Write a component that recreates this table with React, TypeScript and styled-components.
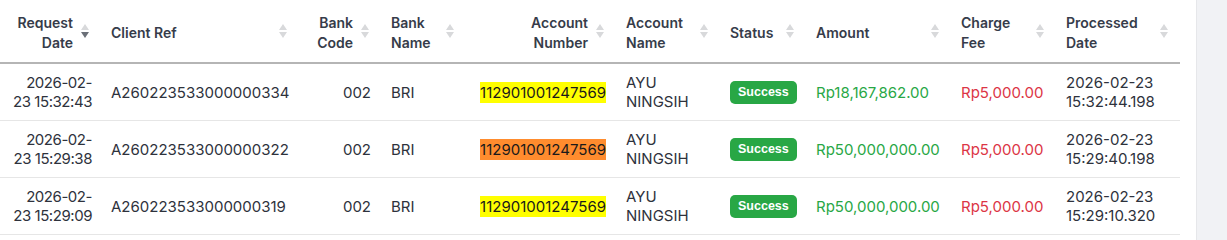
import React from "react";
import styled, { createGlobalStyle, css } from "styled-components";

const GlobalStyle = createGlobalStyle`
    html, body {
        margin: 0;
        padding: 0;
        background: white;
    }
    body {
        font-family: Inter, "Liberation Sans", sans-serif;
    }
`;

const Page = styled.div`
    display: flex;
    flex-direction: row;
    width: 1227px;
    height: 240px;
    overflow: hidden;
`;

const TableArea = styled.div`
    width: 1180px;
    flex-shrink: 0;
`;

const Gutter = styled.div`
    flex: 1;
    margin-left: 16px;
    background: #f1f2f5;
    border-left: 1px solid #e6e7ea;
`;

const Table = styled.table`
    width: 1180px;
    border-collapse: collapse;
    table-layout: fixed;
`;

const HeadCell = styled.th<{ $align?: "left" | "right" }>`
    position: relative;
    height: 58px;
    padding: 4px 28px 0 10px;
    text-align: ${(p) => p.$align ?? "left"};
    vertical-align: middle;
    font-size: 14px;
    font-weight: 600;
    line-height: 20px;
    color: #363c4a;
    border-bottom: 2px solid #b5b5b5;
`;

const SortIcon = styled.span`
    position: absolute;
    right: 12px;
    top: 50%;
    transform: translateY(-50%);
    display: flex;
    flex-direction: column;
    gap: 2px;
`;

const Arrow = styled.span<{ $down?: boolean; $active?: boolean }>`
    width: 0;
    height: 0;
    border-left: 4px solid transparent;
    border-right: 4px solid transparent;
    ${(p) =>
        p.$down
            ? css`border-top: 6px solid ${p.$active ? "#6b7078" : "#d8d9db"};`
            : css`border-bottom: 6px solid #d8d9db;`}
`;

const Row = styled.tr`
    border-bottom: 1px solid #e6e6e6;
`;

const Cell = styled.td<{ $align?: "left" | "right"; $color?: string }>`
    height: 56px;
    padding: 0 10px;
    text-align: ${(p) => p.$align ?? "left"};
    vertical-align: middle;
    font-size: 15px;
    line-height: 19px;
    color: ${(p) => p.$color ?? "#2e323c"};
`;

const DateCell = styled(Cell)`
    padding-right: 9px;
    white-space: nowrap;
    letter-spacing: -0.45px;
`;

const Highlight = styled.span<{ $bg: string }>`
    background: ${(p) => p.$bg};
    color: #1a1a1a;
    padding: 1px 0;
`;

const Badge = styled.span`
    display: inline-block;
    background: #28a745;
    color: white;
    font-family: "Liberation Sans", Arial, sans-serif;
    font-weight: 700;
    font-size: 12.5px;
    line-height: 23px;
    padding: 0 8px;
    border-radius: 5px;
`;

interface Column {
    label: React.ReactNode;
    width: number;
    align?: "left" | "right";
    active?: boolean;
}

const columns: Column[] = [
    { label: <>Request<br />Date</>, width: 101, align: "right", active: true },
    { label: "Client Ref", width: 198 },
    { label: <>Bank<br />Code</>, width: 82, align: "right" },
    { label: <>Bank<br />Name</>, width: 85 },
    { label: <>Account<br />Number</>, width: 150, align: "right" },
    { label: <>Account<br />Name</>, width: 104 },
    { label: "Status", width: 86 },
    { label: "Amount", width: 145 },
    { label: <>Charge<br />Fee</>, width: 105 },
    { label: <>Processed<br />Date</>, width: 124 },
];

interface Transaction {
    requestDate: string;
    requestTime: string;
    clientRef: string;
    account: string;
    highlight: string;
    amount: string;
    processedDate: string;
    processedTime: string;
}

const rows: Transaction[] = [
    {
        requestDate: "2026-02-",
        requestTime: "23 15:32:43",
        clientRef: "A260223533000000334",
        account: "112901001247569",
        highlight: "#ffff00",
        amount: "Rp18,167,862.00",
        processedDate: "2026-02-23",
        processedTime: "15:32:44.198",
    },
    {
        requestDate: "2026-02-",
        requestTime: "23 15:29:38",
        clientRef: "A260223533000000322",
        account: "112901001247569",
        highlight: "#ff8c2e",
        amount: "Rp50,000,000.00",
        processedDate: "2026-02-23",
        processedTime: "15:29:40.198",
    },
    {
        requestDate: "2026-02-",
        requestTime: "23 15:29:09",
        clientRef: "A260223533000000319",
        account: "112901001247569",
        highlight: "#ffff00",
        amount: "Rp50,000,000.00",
        processedDate: "2026-02-23",
        processedTime: "15:29:10.320",
    },
];

export default function App() {
    return (
        <>
            <GlobalStyle />
            <Page>
                <TableArea>
                    <Table>
                        <colgroup>
                            {columns.map((c, i) => (
                                <col key={i} style={{ width: c.width }} />
                            ))}
                        </colgroup>
                        <thead>
                            <tr>
                                {columns.map((c, i) => (
                                    <HeadCell key={i} $align={c.align}>
                                        {c.label}
                                        <SortIcon>
                                            <Arrow />
                                            <Arrow $down $active={c.active} />
                                        </SortIcon>
                                    </HeadCell>
                                ))}
                            </tr>
                        </thead>
                        <tbody>
                            {rows.map((r) => (
                                <Row key={r.clientRef}>
                                    <DateCell $align="right">
                                        {r.requestDate}
                                        <br />
                                        {r.requestTime}
                                    </DateCell>
                                    <Cell>{r.clientRef}</Cell>
                                    <Cell $align="right">002</Cell>
                                    <Cell>BRI</Cell>
                                    <Cell $align="right">
                                        <Highlight $bg={r.highlight}>{r.account}</Highlight>
                                    </Cell>
                                    <Cell>
                                        AYU
                                        <br />
                                        NINGSIH
                                    </Cell>
                                    <Cell>
                                        <Badge>Success</Badge>
                                    </Cell>
                                    <Cell $color="#28a745">{r.amount}</Cell>
                                    <Cell $color="#dc3545">Rp5,000.00</Cell>
                                    <Cell>
                                        {r.processedDate}
                                        <br />
                                        {r.processedTime}
                                    </Cell>
                                </Row>
                            ))}
                        </tbody>
                    </Table>
                </TableArea>
                <Gutter />
            </Page>
        </>
    );
}
